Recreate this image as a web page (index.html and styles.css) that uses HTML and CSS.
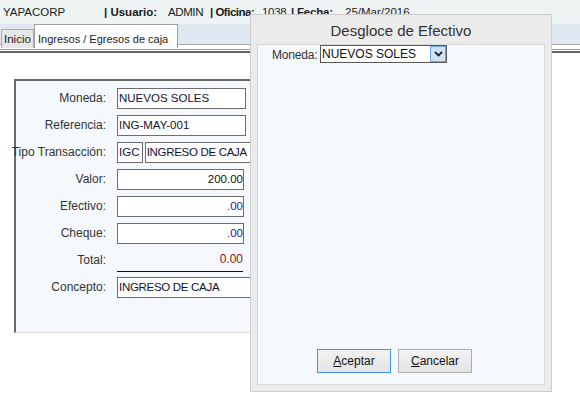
FILE: index.html
```html
<!DOCTYPE html>
<html lang="es">
<head>
  <meta charset="UTF-8" />
  <title>YAPACORP - Ingresos / Egresos de caja</title>
  <link rel="stylesheet" href="styles.css">
</head>
<body>
  <div class="topbar">
    <span class="brand">YAPACORP</span>
    <span class="key k-user">| Usuario:</span><span class="val v-user">ADMIN</span>
    <span class="key k-office">| Oficina:</span><span class="val v-office">1038</span>
    <span class="key k-date">| Fecha:</span><span class="val">25/Mar/2016</span>
  </div>

  <div class="tabbar">
    <div class="tab">Inicio</div>
    <div class="tab active">Ingresos / Egresos de caja</div>
  </div>
  <div class="rule"></div>

  <div class="content">
    <div class="panel">
      <div class="row"><label>Moneda:</label><div class="field wide">NUEVOS SOLES</div></div>
      <div class="row"><label>Referencia:</label><div class="field wide">ING-MAY-001</div></div>
      <div class="row">
        <label>Tipo Transacción:</label>
        <div class="field code">IGC</div>
        <div class="field long">INGRESO DE CAJA</div>
      </div>
      <div class="row"><label>Valor:</label><div class="field num">200.00</div></div>
      <div class="row"><label>Efectivo:</label><div class="field num blue">.00</div></div>
      <div class="row"><label>Cheque:</label><div class="field num blue">.00</div></div>
      <div class="row"><label>Total:</label><div class="total">0.00</div></div>
      <div class="row"><label>Concepto:</label><div class="field long">INGRESO DE CAJA</div></div>
    </div>
  </div>

  <!-- modal window -->
  <div class="dialog">
    <div class="dialog-title">Desgloce de Efectivo</div>
    <div class="dialog-body">
      <div class="dlg-row">
        <label>Moneda:</label>
        <div class="select">
          <span>NUEVOS SOLES</span>
          <span class="arrow">
            <svg width="9" height="6" viewBox="0 0 9 6"><path d="M1 1 L4.5 4.5 L8 1" fill="none" stroke="#222" stroke-width="1.8"/></svg>
          </span>
        </div>
      </div>
      <div class="dlg-buttons">
        <button class="btn focused"><u>A</u>ceptar</button>
        <button class="btn"><u>C</u>ancelar</button>
      </div>
    </div>
  </div>
</body>
</html>
```

FILE: styles.css
```css
body {
  margin: 0;
  font-family: 'Liberation Sans', Arial, sans-serif;
  font-size: 12px;
  color: #222;
  background: #fff;
  width: 580px;
  height: 399px;
  overflow: hidden;
}

.topbar {
  height: 24px;
  line-height: 25px;
  padding-left: 3px;
  font-size: 11.5px;
  background: #eef4f4;
  display: flex;
  white-space: nowrap;
  color: #1a1a1a;
}

.brand { width: 101px; }
.key { font-weight: bold; }
.k-user { width: 64px; }
.v-user { width: 42px; letter-spacing: -0.4px; }
.k-office { width: 52px; letter-spacing: -0.5px; }
.v-office { width: 29px; letter-spacing: -0.3px; }
.k-date { width: 54px; letter-spacing: -0.2px; }

.tabbar {
  height: 24px;
  display: flex;
  align-items: flex-end;
  white-space: nowrap;
  background: linear-gradient(#dfe8f0 0 20px, #a9a9a9 20px 21px, #fff 21px);
}

.tab {
  box-sizing: border-box;
  height: 19px;
  line-height: 19px;
  padding: 0 2px;
  margin-left: 1px;
  width: 33px;
  font-size: 11.5px;
  background: #e6e6e6;
  border: 1px solid #ababab;
  border-bottom: none;
}

.tab.active {
  height: 24px;
  line-height: 29px;
  width: 144px;
  margin-left: 0;
  padding-left: 3px;
  font-size: 11px;
  background: #fff;
  border-color: #a0a0a0;
}

.rule {
  margin-top: 1px;
  height: 1px;
  border-top: 1px solid #9e9e9e;
  border-bottom: 2px solid #666;
}

.content {
  padding: 26px 0 0 14px;
}

.panel {
  width: 270px;
  padding: 7px 0 34px;
  background: #f5f9fd;
  border-left: 2px solid #6b6b6b;
  border-top: 2px solid #6b6b6b;
  border-bottom: 1px solid #dcdcdc;
  display: flex;
  flex-direction: column;
  gap: 6px;
}

.row {
  display: flex;
  height: 21px;
  gap: 11px;
}

.row label {
  width: 90px;
  flex: none;
  display: flex;
  justify-content: flex-end;
  white-space: nowrap;
  line-height: 14px;
  padding-top: 3px;
  color: #333;
}

.field {
  box-sizing: border-box;
  height: 21px;
  padding: 2px 1px;
  line-height: 14px;
  background: #fff;
  border: 1px solid #6e6e6e;
  color: #111133;
  white-space: nowrap;
  font-size: 11.5px;
}

.wide { width: 129px; }
.code { width: 27px; margin-right: -9px; }
.long { width: 150px; letter-spacing: -0.3px; }
.num { width: 127px; text-align: right; padding-right: 0; color: #111; }
.blue { color: #1a1ab0; }

.total {
  box-sizing: border-box;
  width: 126px;
  height: 22px;
  padding-top: 2px;
  line-height: 14px;
  text-align: right;
  color: #8b1010;
  border-bottom: 1px solid #111;
}

.dialog {
  position: absolute;
  left: 250px;
  top: 14px;
  width: 302px;
  height: 378px;
  box-sizing: border-box;
  background: #ebebeb;
  border: 1px solid #cdcdcd;
  display: flex;
  flex-direction: column;
}

.dialog-title {
  height: 29px;
  line-height: 31px;
  text-align: center;
  font-size: 15px;
  color: #333;
}

.dialog-body {
  flex: 1;
  margin: 0 6px 6px;
  background: #f5f9fd;
  border: 1px solid #d8d8d8;
  display: flex;
  flex-direction: column;
}

.dlg-row {
  display: flex;
  padding: 0 0 0 14px;
}

.dlg-row label {
  width: 48px;
  line-height: 14px;
  padding-top: 3px;
  color: #333;
  letter-spacing: -0.2px;
}

.select {
  box-sizing: border-box;
  width: 127px;
  height: 18px;
  border: 1px solid #5a5a5a;
  background: #fff;
  display: flex;
  justify-content: space-between;
  line-height: 16px;
  padding-left: 1px;
  color: #111;
}

.arrow {
  box-sizing: border-box;
  width: 16px;
  height: 16px;
  background: #cfe3f7;
  border: 1px solid #6aa7e4;
  display: flex;
  align-items: center;
  justify-content: center;
}

.dlg-buttons {
  margin-top: auto;
  display: flex;
  gap: 7px;
  padding: 0 0 11px 59px;
}

.btn {
  box-sizing: border-box;
  width: 74px;
  height: 24px;
  font-family: 'Liberation Sans', Arial, sans-serif;
  font-size: 12px;
  color: #111;
  background: linear-gradient(#f2f2f2, #e4e4e4);
  border: 1px solid #adadad;
  padding: 0;
}

.btn.focused {
  border-color: #3c96f0;
}
```
